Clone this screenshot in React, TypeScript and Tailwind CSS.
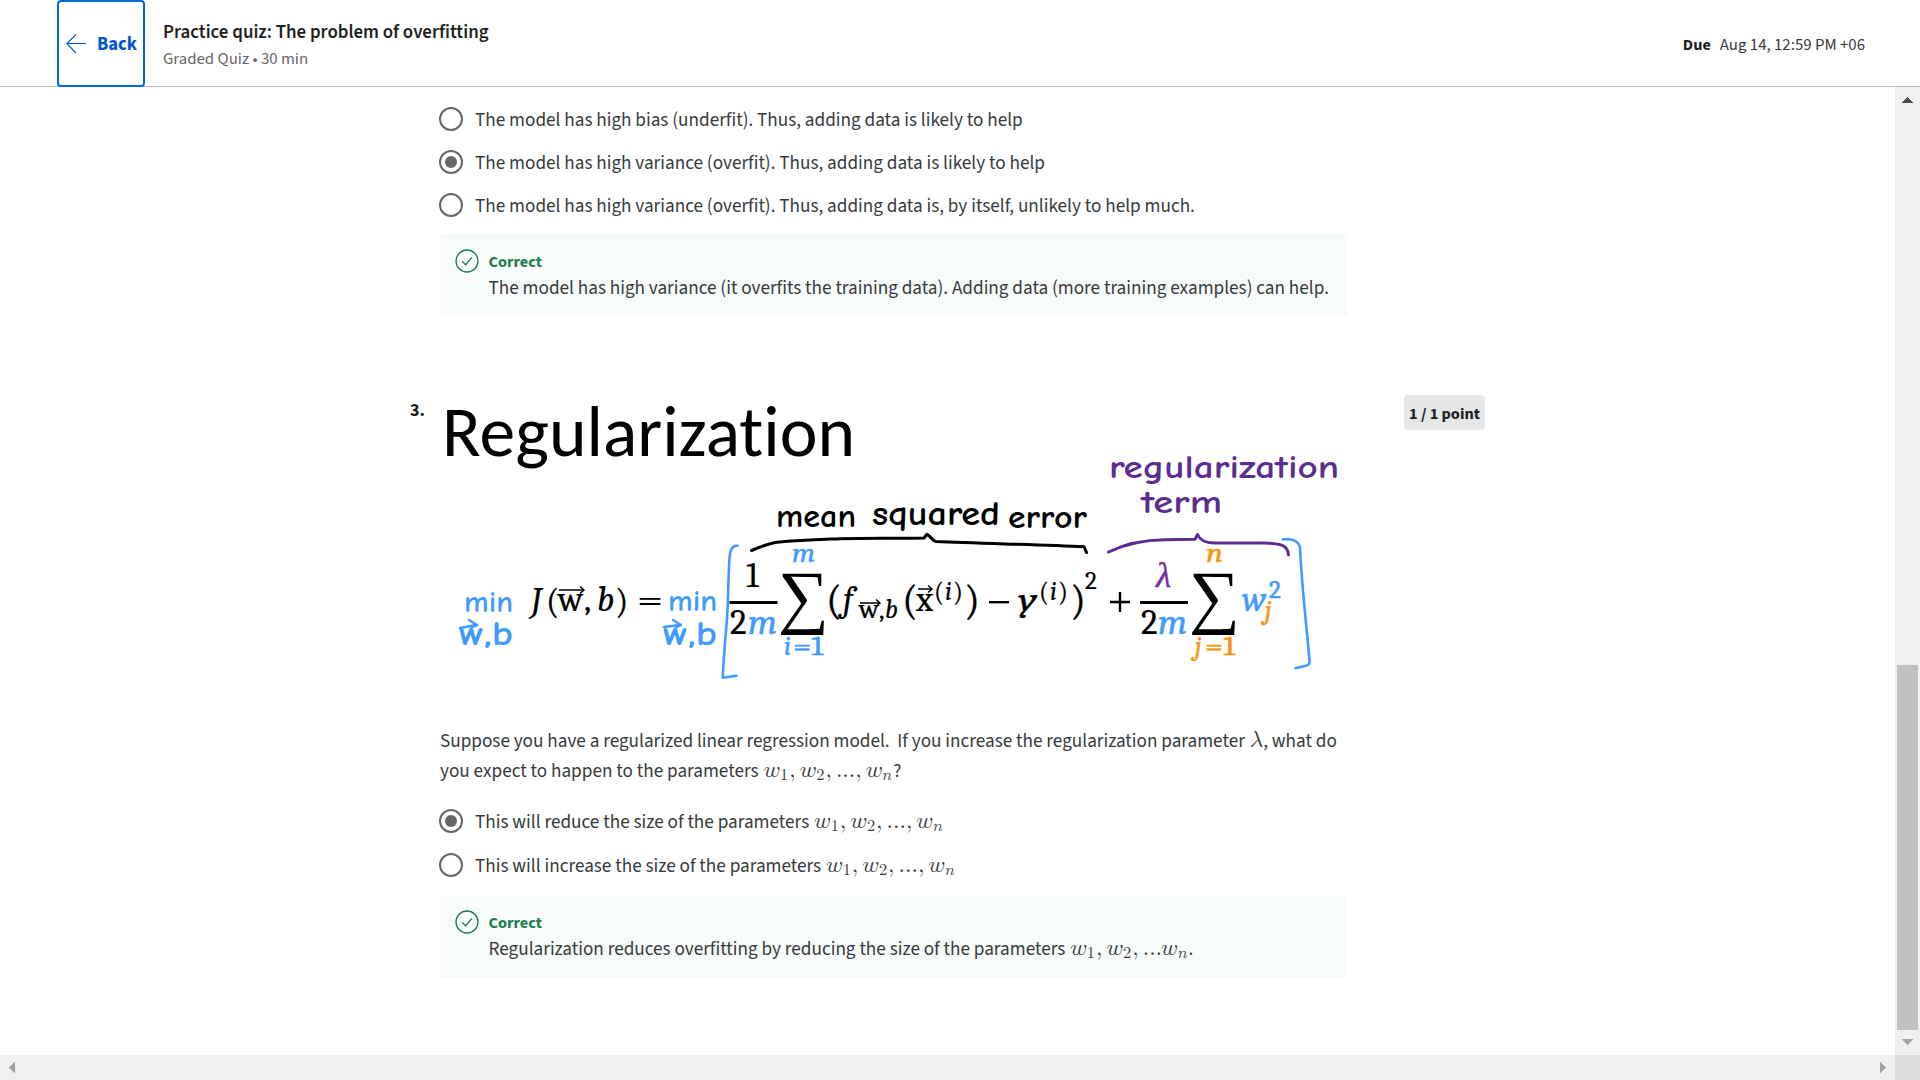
import type { ReactNode } from "react";

const BLUE = "#3f9bff";
const INK = "#000000";
const PURPLE = "#5c2d91";
const ORANGE = "#f5960f";

/* ---------- header ---------- */

function Header() {
  return (
    <header className="flex h-[87px] shrink-0 items-start border-b border-[#bbbbbb] bg-white">
      <button className="ml-[57px] flex h-[87px] w-[88px] shrink-0 items-center rounded-[4px] border-2 border-[#0068dd] pl-[7px] text-[18.6px] font-bold text-[#0056d2]">
        <svg width="20" height="20" viewBox="0 0 20 20" fill="none" stroke="#0056d2" strokeWidth="1.1">
          <path d="M20 9.5H1M10 0.5L0.8 9.5L10 19" />
        </svg>
        <span className="mt-[3px] ml-[11px]">Back</span>
      </button>
      <div className="ml-[18px] flex flex-col pt-5">
        <h1 className="text-[18.9px] leading-[26px] font-semibold text-[#1f1f1f]">Practice quiz: The problem of overfitting</h1>
        <p className="text-[16.8px] leading-[26px] text-[#666666]">Graded Quiz • 30 min</p>
      </div>
      <div className="mr-[55px] ml-auto flex gap-[9px] pt-8 leading-[26px] text-[#1f1f1f]">
        <span className="text-[16.3px] font-bold">Due</span>
        <span className="text-[16.8px] text-[#373a3c]">Aug 14, 12:59 PM +06</span>
      </div>
    </header>
  );
}

/* ---------- inline math ---------- */

function M({ children }: { children: ReactNode }) {
  return (
    <span className="ml-px [font-family:'Latin_Modern_Math','STIX_Two_Text','Liberation_Serif',serif] text-[23.2px] leading-[0] whitespace-nowrap">
      {children}
    </span>
  );
}

function W({ n }: { n: string }) {
  return (
    <>
      𝑤<span className="relative top-[3px] mr-[1px] text-[16.4px]">{n}</span>
    </>
  );
}

function Params({ last = true }: { last?: boolean }) {
  return (
    <M>
      <W n="1" />
      <span className="mr-[4px]">,</span>
      <W n="2" />
      <span className="mr-[4px]">,</span>
      <span className="-mr-px">...</span>
      {last && <span className="mr-[4px] ml-px">,</span>}
      <W n="𝑛" />
    </M>
  );
}

/* ---------- quiz parts ---------- */

function Option({ checked, tall, children }: { checked?: boolean; tall?: boolean; children?: ReactNode }) {
  return (
    <label className={`-ml-px flex items-start gap-3 pt-[9px] ${tall ? "h-11" : "h-[43px]"}`}>
      <span className="flex size-6 shrink-0 items-center justify-center rounded-full border-2 border-[#666666]">
        {checked && <span className="size-3 rounded-full bg-[#666666]" />}
      </span>
      <span className="leading-[27px] whitespace-nowrap">{children}</span>
    </label>
  );
}

function Feedback({ children, tall }: { children: ReactNode; tall?: boolean }) {
  return (
    <div className={`flex bg-[#f7fbf9] pt-[14px] pl-[15px] ${tall ? "h-[83px]" : "h-[82px]"}`}>
      <svg className="mt-px" width="24" height="24" viewBox="0 0 24 24" fill="none" stroke="#1d7c50" strokeWidth="1.3">
        <circle cx="12" cy="12" r="11" />
        <path d="M7.2 12.4L10.6 15.8L17 8.4" />
      </svg>
      <div className="ml-[9.5px]">
        <p className="text-[16.3px] leading-7 font-bold text-[#1d7c50]">Correct</p>
        <p className="leading-6 whitespace-nowrap">{children}</p>
      </div>
    </div>
  );
}

/* ---------- regularization formula drawing ---------- */

type TProps = { x: number; y: number; s: number; w?: number; c?: string; i?: boolean; children: string };

function Eq({ x, y, s, w, c = INK, i, children }: TProps) {
  return (
    <text
      className={`[font-family:'Caladea','Liberation_Serif',serif] ${i ? "italic" : ""}`}
      x={x}
      y={y}
      fontSize={s}
      fill={c}
      stroke={c}
      strokeWidth={c === INK ? 0.2 : 0.5}
      textLength={w}
      lengthAdjust="spacingAndGlyphs"
    >
      {children}
    </text>
  );
}

function Hand({ x, y, s, w, c = INK, children }: TProps) {
  return (
    <text
      className="font-bold [font-family:'Comic_Neue','Open_Sans',sans-serif]"
      x={x}
      y={y}
      fontSize={s}
      fill={c}
      textLength={w}
      lengthAdjust="spacingAndGlyphs"
    >
      {children}
    </text>
  );
}

function Arrow({ x, y, w }: { x: number; y: number; w: number }) {
  return <path d={`M${x} ${y}h${w}m-4 -3.5l4 3.5l-4 3.5`} fill="none" stroke={INK} strokeWidth="1.4" />;
}

function Sum({ x }: { x: number }) {
  return (
    <text className="[font-family:'STIX_Two_Text','Liberation_Serif',serif]" x={x} y="619.5" fontSize="71" textLength="51" lengthAdjust="spacingAndGlyphs">
      ∑
    </text>
  );
}

function Formula() {
  return (
    <svg width="907" height="300" viewBox="440 395 907 300" className="overflow-visible">
      <text
        className="[font-family:'Carlito','Noto_Sans_CJK_SC',sans-serif] [font-variant-ligatures:none]"
        x="442"
        y="455.7"
        fontSize="72.5"
        textLength="413"
        lengthAdjust="spacingAndGlyphs"
      >
        Regularization
      </text>

      <Hand x={776} y={527} s={33} w={80}>mean</Hand>
      <Hand x={872} y={525} s={34} w={128}>squared</Hand>
      <Hand x={1008} y={528} s={33} w={79}>error</Hand>
      <Hand x={1109} y={478} s={33} w={230} c={PURPLE}>regularization</Hand>
      <Hand x={1141} y={513} s={33} w={81} c={PURPLE}>term</Hand>
      <Hand x={464} y={612} s={30} w={49} c={BLUE}>min</Hand>
      <Hand x={459} y={645} s={34} w={54} c={BLUE}>w,b</Hand>
      <Hand x={668} y={611} s={30} w={49} c={BLUE}>min</Hand>
      <Hand x={663} y={645} s={34} w={54} c={BLUE}>w,b</Hand>

      <g fill="none" strokeLinecap="round" strokeLinejoin="round">
        <g stroke={BLUE} strokeWidth="2.6">
          <path d="M460 628L476 625M469 620L477 625L472 627" />
          <path d="M664 627L680 625M673 620L681 625L676 627" />
          <path d="M737.5 545.8C731 545 730 552 729.3 560C728 590 728 610 726.5 625C724.5 650 723 665 722.8 677.8L736.5 675.8" />
          <path d="M1283 539.5C1292 538 1299 541 1300 548C1302 590 1307 630 1309.5 660C1310 664 1309 665 1305 666L1295.5 668.3" />
        </g>
        <path
          d="M751.5 550.5C760 547 768 543.5 777 542.3C800 540 820 539.5 840 538.7C870 538.2 900 538.5 924 538L927 534.3C931 536 932 541 936 541.5C980 543.5 1040 544.5 1084 546.7L1086.5 552.5"
          stroke={INK}
          strokeWidth="3"
        />
        <path
          d="M1108.5 552C1125 544 1145 540 1165 539.8L1195 539.3L1197.5 534.5C1200 540 1204 543 1214 543L1265 543C1280 543.5 1288 545 1288.5 555"
          stroke={PURPLE}
          strokeWidth="3"
        />
      </g>

      <Eq x={531} y={612} s={35} i>J</Eq>
      <Eq x={546} y={613} s={35}>(</Eq>
      <Eq x={558} y={611} s={35} w={25}>w</Eq>
      <Arrow x={559} y={590} w={25} />
      <Eq x={584} y={611} s={35}>,</Eq>
      <Eq x={597} y={611} s={35} i>b</Eq>
      <Eq x={615} y={613} s={35}>)</Eq>
      <Eq x={637} y={612} s={35} w={26}>=</Eq>

      <Eq x={746} y={587} s={35}>1</Eq>
      <rect x="729.5" y="601" width="48" height="3" />
      <Eq x={730} y={634} s={35}>2</Eq>
      <Eq x={748} y={634} s={35} w={29} i c={BLUE}>m</Eq>
      <Eq x={792} y={562} s={26} w={23} i c={BLUE}>m</Eq>
      <Sum x={778} />
      <Eq x={784} y={655} s={26} i c={BLUE}>i</Eq>
      <Eq x={793} y={655} s={26} w={30} c={BLUE}>=1</Eq>

      <Eq x={826} y={614} s={42}>(</Eq>
      <Eq x={843} y={611} s={35} i>f</Eq>
      <Eq x={859} y={618} s={26} w={20}>w</Eq>
      <Arrow x={860} y={603} w={20} />
      <Eq x={879} y={618} s={26}>,</Eq>
      <Eq x={885} y={618} s={26} i>b</Eq>
      <Eq x={902} y={614} s={42}>(</Eq>
      <Eq x={916} y={611} s={35} w={17}>x</Eq>
      <Arrow x={918} y={589} w={14} />
      <Eq x={934} y={601} s={26}>(</Eq>
      <Eq x={945} y={600} s={26} i>i</Eq>
      <Eq x={953} y={601} s={26}>)</Eq>
      <Eq x={964} y={614} s={42}>)</Eq>
      <rect x="989" y="601" width="20" height="2.4" />
      <Eq x={1018} y={611} s={34} w={19} i>y</Eq>
      <Eq x={1039} y={601} s={26}>(</Eq>
      <Eq x={1050} y={600} s={26} i>i</Eq>
      <Eq x={1058} y={601} s={26}>)</Eq>
      <Eq x={1070} y={614} s={42}>)</Eq>
      <Eq x={1085} y={589} s={25}>2</Eq>

      <path d="M1110 602H1130M1120 592V612" stroke={INK} strokeWidth="2.4" />
      <Eq x={1156} y={587} s={35} i c="#7030a0">λ</Eq>
      <rect x="1140" y="601" width="48" height="3" />
      <Eq x={1141} y={634} s={35}>2</Eq>
      <Eq x={1158} y={634} s={35} w={29} i c={BLUE}>m</Eq>
      <Eq x={1206} y={562} s={26} w={17} i c={ORANGE}>n</Eq>
      <Sum x={1189} />
      <Eq x={1195} y={655} s={26} i c={ORANGE}>j</Eq>
      <Eq x={1205} y={655} s={26} w={30} c={ORANGE}>=1</Eq>
      <Eq x={1242} y={611} s={35} w={24} i c={BLUE}>w</Eq>
      <Eq x={1269} y={598} s={25}  c={BLUE}>2</Eq>
      <Eq x={1265} y={619} s={26} i c={ORANGE}>j</Eq>
    </svg>
  );
}

/* ---------- scrollbars ---------- */

function VerticalScrollbar() {
  return (
    <div className="flex w-[25px] shrink-0 flex-col items-center bg-[#f0f0f0]">
      <svg className="mt-[10px]" width="11" height="6" viewBox="0 0 11 6" shapeRendering="crispEdges">
        <path d="M5.5 0L11 6H0Z" fill="#505050" />
      </svg>
      <div className="mt-[562px] h-[365px] w-[21px] bg-[#c1c1c1]" />
      <svg className="mt-[9px]" width="11" height="6" viewBox="0 0 11 6" shapeRendering="crispEdges">
        <path d="M0 0H11L5.5 6Z" fill="#a3a3a3" />
      </svg>
    </div>
  );
}

function HorizontalScrollbar() {
  return (
    <div className="flex h-[25px] shrink-0 bg-[#f0f0f0]">
      <div className="flex flex-1 items-center justify-between px-[9px]">
        <svg width="6" height="11" viewBox="0 0 6 11" shapeRendering="crispEdges">
          <path d="M6 0V11L0 5.5Z" fill="#a3a3a3" />
        </svg>
        <svg width="6" height="11" viewBox="0 0 6 11" shapeRendering="crispEdges">
          <path d="M0 0V11L6 5.5Z" fill="#a3a3a3" />
        </svg>
      </div>
      <div className="w-[25px] bg-[#dcdcdc]" />
    </div>
  );
}

/* ---------- page ---------- */

export default function App() {
  return (
    <div className="flex h-screen w-screen flex-col overflow-hidden bg-white [font-family:'Source_Sans_3','Noto_Sans_CJK_SC',sans-serif] text-[19.2px] text-[#373a3c]">
      <Header />
      <div className="flex min-h-0 flex-1">
        <main className="min-w-0 flex-1 overflow-hidden pl-[410px]">
          <section className="-mt-[33px] ml-[30px] w-[907px]">
            <Option tall />
            <Option>The model has high bias (underfit). Thus, adding data is likely to help</Option>
            <Option checked>The model has high variance (overfit). Thus, adding data is likely to help</Option>
            <Option>The model has high variance (overfit). Thus, adding data is, by itself, unlikely to help much.</Option>
            <div className="mt-[7px]">
              <Feedback>
                The model has high variance (it overfits the training data). Adding data (more training examples) can help.
              </Feedback>
            </div>
          </section>

          <section className="mt-[79px] flex items-start">
            <span className="w-[30px] text-[18px] leading-[31px] font-bold text-[#1f1f1f]">3.</span>
            <div className="w-[907px]">
              <Formula />
              <p className="mt-[31px] leading-[30px] whitespace-nowrap">
                Suppose you have a regularized linear regression model.&nbsp; If you increase the regularization parameter <M>𝜆</M>, what do
                <br />
                you expect to happen to the parameters <Params />?
              </p>
              <div className="mt-[14px]">
                <Option checked tall>
                  This will reduce the size of the parameters <Params />
                </Option>
                <Option tall>
                  This will increase the size of the parameters <Params />
                </Option>
              </div>
              <div className="mt-[7px]">
                <Feedback tall>
                  Regularization reduces overfitting by reducing the size of the parameters <Params last={false} />.
                </Feedback>
              </div>
            </div>
            <span className="ml-[57px] flex h-[35px] w-[81px] items-center justify-center rounded-[4px] bg-[#e5e7e8] pt-[3px] text-[16.3px] font-bold text-[#1f1f1f]">
              1 / 1 point
            </span>
          </section>
        </main>
        <VerticalScrollbar />
      </div>
      <HorizontalScrollbar />
    </div>
  );
}
